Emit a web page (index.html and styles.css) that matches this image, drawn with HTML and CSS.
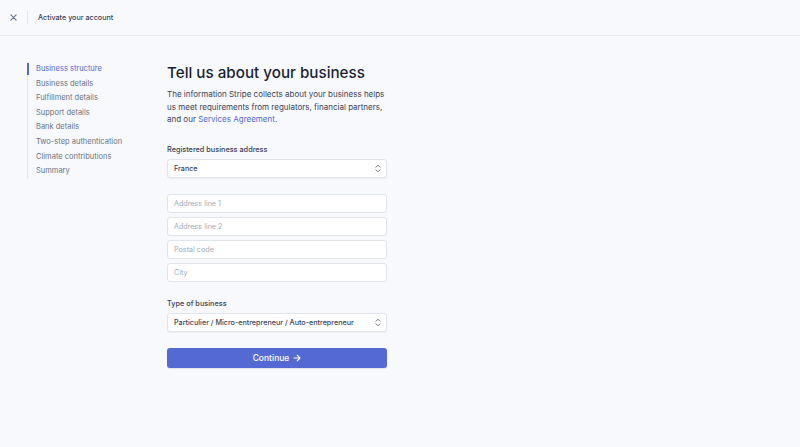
FILE: index.html
```html
<!DOCTYPE html>
<html lang="en">
<head>
  <meta charset="UTF-8">
  <meta name="viewport" content="width=device-width, initial-scale=1.0">
  <title>Activate your account</title>
  <link rel="stylesheet" href="styles.css">
</head>
<body>
  <div class="header">
    <span class="close-btn">
      <svg width="7" height="7" viewBox="0 0 8 8"><path d="M1 1l6 6M7 1L1 7" stroke="#697386" stroke-width="1.3" stroke-linecap="round" fill="none"/></svg>
    </span>
    <span class="header-divider"></span>
    <span class="header-title">Activate your account</span>
  </div>

  <div class="content">
    <ul class="steps">
      <li class="step active">Business structure</li>
      <li class="step">Business details</li>
      <li class="step">Fulfillment details</li>
      <li class="step">Support details</li>
      <li class="step">Bank details</li>
      <li class="step">Two-step authentication</li>
      <li class="step">Climate contributions</li>
      <li class="step">Summary</li>
    </ul>

    <div class="form">
      <h1 class="title">Tell us about your business</h1>
      <p class="intro">The information Stripe collects about your business helps us meet requirements from regulators, financial partners, and our <a href="#">Services Agreement</a>.</p>

      <div class="field">
        <div class="label">Registered business address</div>
        <div class="select">
          <span>France</span>
          <svg class="chevrons" width="6" height="9" viewBox="0 0 6 9"><path d="M1 3.2L3 1.2l2 2M1 5.8l2 2 2-2" stroke="#697386" stroke-width="1" fill="none" stroke-linecap="round" stroke-linejoin="round"/></svg>
        </div>
      </div>

      <div class="address">
        <div class="input">Address line 1</div>
        <div class="input">Address line 2</div>
        <div class="input">Postal code</div>
        <div class="input">City</div>
      </div>

      <div class="field">
        <div class="label">Type of business</div>
        <div class="select">
          <span>Particulier / Micro-entrepreneur / Auto-entrepreneur</span>
          <svg class="chevrons" width="6" height="9" viewBox="0 0 6 9"><path d="M1 3.2L3 1.2l2 2M1 5.8l2 2 2-2" stroke="#697386" stroke-width="1" fill="none" stroke-linecap="round" stroke-linejoin="round"/></svg>
        </div>
      </div>

      <button class="continue-btn">
        <span>Continue</span>
        <svg width="8" height="8" viewBox="0 0 8 8"><path d="M1 4h6M4.2 1.2L7 4 4.2 6.8" stroke="#fff" stroke-width="1.1" fill="none" stroke-linecap="round" stroke-linejoin="round"/></svg>
      </button>
    </div>
  </div>
</body>
</html>
```

FILE: styles.css
```css
* {
  margin: 0;
  padding: 0;
  box-sizing: border-box;
}

body {
  width: 800px;
  height: 447px;
  font-family: Inter, 'Noto Sans', sans-serif;
  background: #f7f9fc;
  color: #3c4257;
  overflow: hidden;
}

.header {
  height: 36px;
  display: flex;
  align-items: center;
  padding-left: 10px;
  border-bottom: 1px solid #e6ebf1;
}

.close-btn {
  display: flex;
  width: 8px;
}

.header-divider {
  width: 1px;
  height: 13px;
  background: #e3e8ee;
  margin: 0 10px 0 9px;
}

.header-title {
  font-size: 7.2px;
  font-weight: 500;
  color: #3c4257;
}

.content {
  display: flex;
  padding: 26px 0 0 27px;
}

.steps {
  list-style: none;
  width: 140px;
  align-self: flex-start;
  border-left: 1px solid #e3e8ee;
}

.step {
  position: relative;
  height: 14.6px;
  line-height: 14.6px;
  padding-left: 8px;
  font-size: 7.5px;
  color: #697386;
}

.step.active {
  color: #5469d4;
}

.step.active::before {
  content: "";
  position: absolute;
  left: -1px;
  top: 1px;
  bottom: 2px;
  width: 1.5px;
  background: #5469d4;
}

.form {
  width: 220px;
}

.title {
  font-size: 15.2px;
  font-weight: 500;
  color: #1a1f36;
  line-height: 22px;
  margin-bottom: 4px;
}

.intro {
  font-size: 8px;
  line-height: 12.5px;
  color: #3c4257;
}

.intro a {
  color: #5469d4;
  text-decoration: none;
}

.field {
  margin-top: 18px;
}

.label {
  font-size: 7.3px;
  font-weight: 500;
  line-height: 12px;
  margin-bottom: 3px;
  color: #3c4257;
}

.select,
.input {
  height: 19px;
  display: flex;
  align-items: center;
  justify-content: space-between;
  padding: 0 6px;
  background: #fff;
  border: 1px solid #e1e5eb;
  border-radius: 3px;
  box-shadow: 0 1px 1px rgba(0, 0, 0, 0.05);
  font-size: 7.2px;
}

.select {
  color: #3c4257;
  font-weight: 500;
}

.chevrons {
  margin-right: -1px;
}

.address {
  display: flex;
  flex-direction: column;
  gap: 4px;
  margin-top: 16px;
}

.input {
  color: #a3acb9;
  box-shadow: none;
}

.address + .field {
  margin-top: 16px;
}

.continue-btn {
  margin-top: 16px;
  width: 220px;
  height: 20px;
  border: none;
  border-radius: 3px;
  background: #5469d4;
  color: #fff;
  font-family: inherit;
  font-size: 8.5px;
  font-weight: 500;
  display: flex;
  align-items: center;
  justify-content: center;
  gap: 4px;
  box-shadow: 0 1px 1px rgba(0, 0, 0, 0.1);
}
```
